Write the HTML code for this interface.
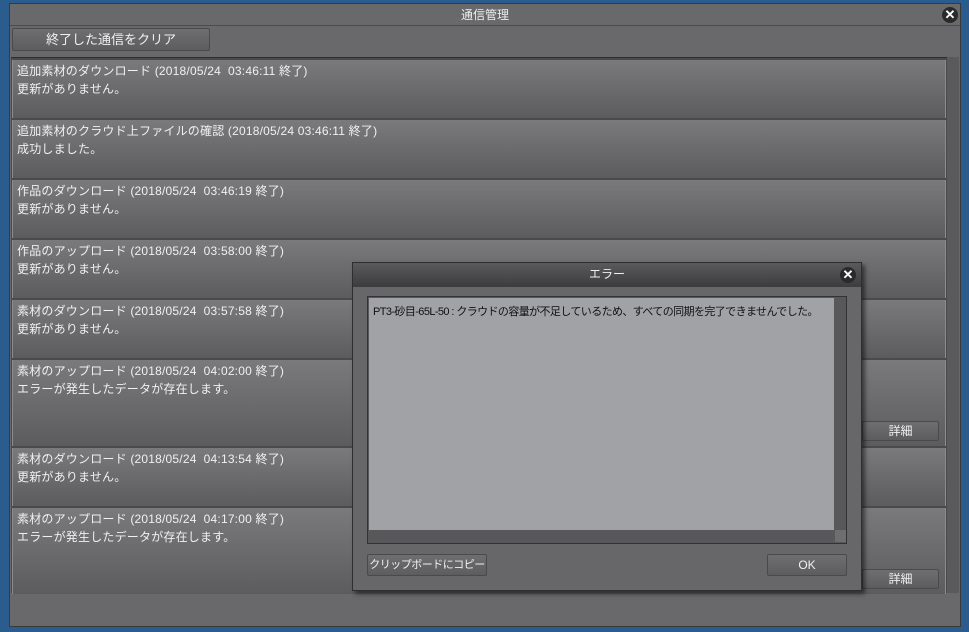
<!DOCTYPE html>
<html><head><meta charset="utf-8"><style>
*{margin:0;padding:0;box-sizing:border-box}
body{width:969px;height:632px;background:#2a5d8e;position:relative;overflow:hidden;font-family:"Liberation Sans","Noto Sans CJK JP",sans-serif;font-size:12px;color:#f0f0f0}
.abs{position:absolute}
.win{left:9px;top:3px;width:952px;height:624px;background:#69696b;border:1px solid #3a3a3a}
.title{left:0;top:0;width:950px;height:22px;text-align:center;line-height:22px;color:#eee;border-bottom:1px solid #4c4c4c}
.close{width:16px;height:16px;border-radius:50%;background:#2a2a2a;color:#fff;font-size:13px;font-weight:bold;line-height:16px;text-align:center}
.btn{background:linear-gradient(#6e6e70,#5d5d5f);border:1px solid #4a4a4a;border-radius:2px;text-align:center;color:#f0f0f0}
.list{left:1px;top:53px;width:936px;height:536px;background:#4a4a4a;border-top:1px solid #2e2e2e}
.item{position:absolute;left:1px;width:934px;background:linear-gradient(#7a7a7c,#5c5c5e);border-left:1px solid #8c8c8c;border-right:1px solid #8c8c8c;padding:2px 0 0 4px;line-height:18px;letter-spacing:0.2px}
.sb{left:937px;top:53px;width:12px;height:536px;background:#5a5a5c}
</style></head><body>
<div class="abs win">
 <div class="abs title">通信管理</div>
 <div class="abs close" style="left:932px;top:3px">✕</div>
 <div class="abs btn" style="left:2px;top:24px;width:198px;height:23px;line-height:21px;font-size:13px">終了した通信をクリア</div>
 <div class="abs list">
  <div class="item" style="top:2px;height:58px">追加素材のダウンロード (2018/05/24&nbsp; 03:46:11 終了)<br>更新がありません。</div>
  <div class="item" style="top:62px;height:58px">追加素材のクラウド上ファイルの確認 (2018/05/24 03:46:11 終了)<br>成功しました。</div>
  <div class="item" style="top:122px;height:58px">作品のダウンロード (2018/05/24&nbsp; 03:46:19 終了)<br>更新がありません。</div>
  <div class="item" style="top:182px;height:58px">作品のアップロード (2018/05/24&nbsp; 03:58:00 終了)<br>更新がありません。</div>
  <div class="item" style="top:242px;height:58px">素材のダウンロード (2018/05/24&nbsp; 03:57:58 終了)<br>更新がありません。</div>
  <div class="item" style="top:302px;height:86px">素材のアップロード (2018/05/24&nbsp; 04:02:00 終了)<br>エラーが発生したデータが存在します。</div>
  <div class="item" style="top:390px;height:58px">素材のダウンロード (2018/05/24&nbsp; 04:13:54 終了)<br>更新がありません。</div>
  <div class="item" style="top:450px;height:86px">素材のアップロード (2018/05/24&nbsp; 04:17:00 終了)<br>エラーが発生したデータが存在します。</div>
 </div>
 <div class="abs btn" style="left:852px;top:417px;width:77px;height:20px;line-height:18px">詳細</div>
 <div class="abs btn" style="left:852px;top:565px;width:77px;height:20px;line-height:18px">詳細</div>
 <div class="abs sb"></div>
</div>
<div class="abs" style="left:352px;top:262px;width:510px;height:329px;background:#676769;border:1px solid #2e2e2e;box-shadow:3px 3px 4px rgba(0,0,0,.5)">
 <div class="abs" style="left:0;top:0;width:508px;height:24px;background:linear-gradient(#5a5a5c,#3c3c3e);text-align:center;line-height:22px;color:#eee">エラー</div>
 <div class="abs close" style="left:487px;top:4px">✕</div>
 <div class="abs" style="left:14px;top:33px;width:480px;height:248px;background:#58585a;border:1px solid #333">
  <div class="abs" style="left:1px;top:1px;width:465px;height:232px;background:#a0a2a6;color:#111;font-size:11px;padding:5px 4px;letter-spacing:-0.6px;white-space:nowrap;overflow:hidden">PT3-砂目-65L-50 : クラウドの容量が不足しているため、すべての同期を完了できませんでした。</div>
  <div class="abs" style="left:467px;top:233px;width:11px;height:12px;background:#6e6e70"></div>
 </div>
 <div class="abs btn" style="left:14px;top:291px;width:120px;height:22px;line-height:20px;font-size:11px;letter-spacing:-0.5px">クリップボードにコピー</div>
 <div class="abs btn" style="left:414px;top:291px;width:80px;height:22px;line-height:20px">OK</div>
</div>
</body></html>
